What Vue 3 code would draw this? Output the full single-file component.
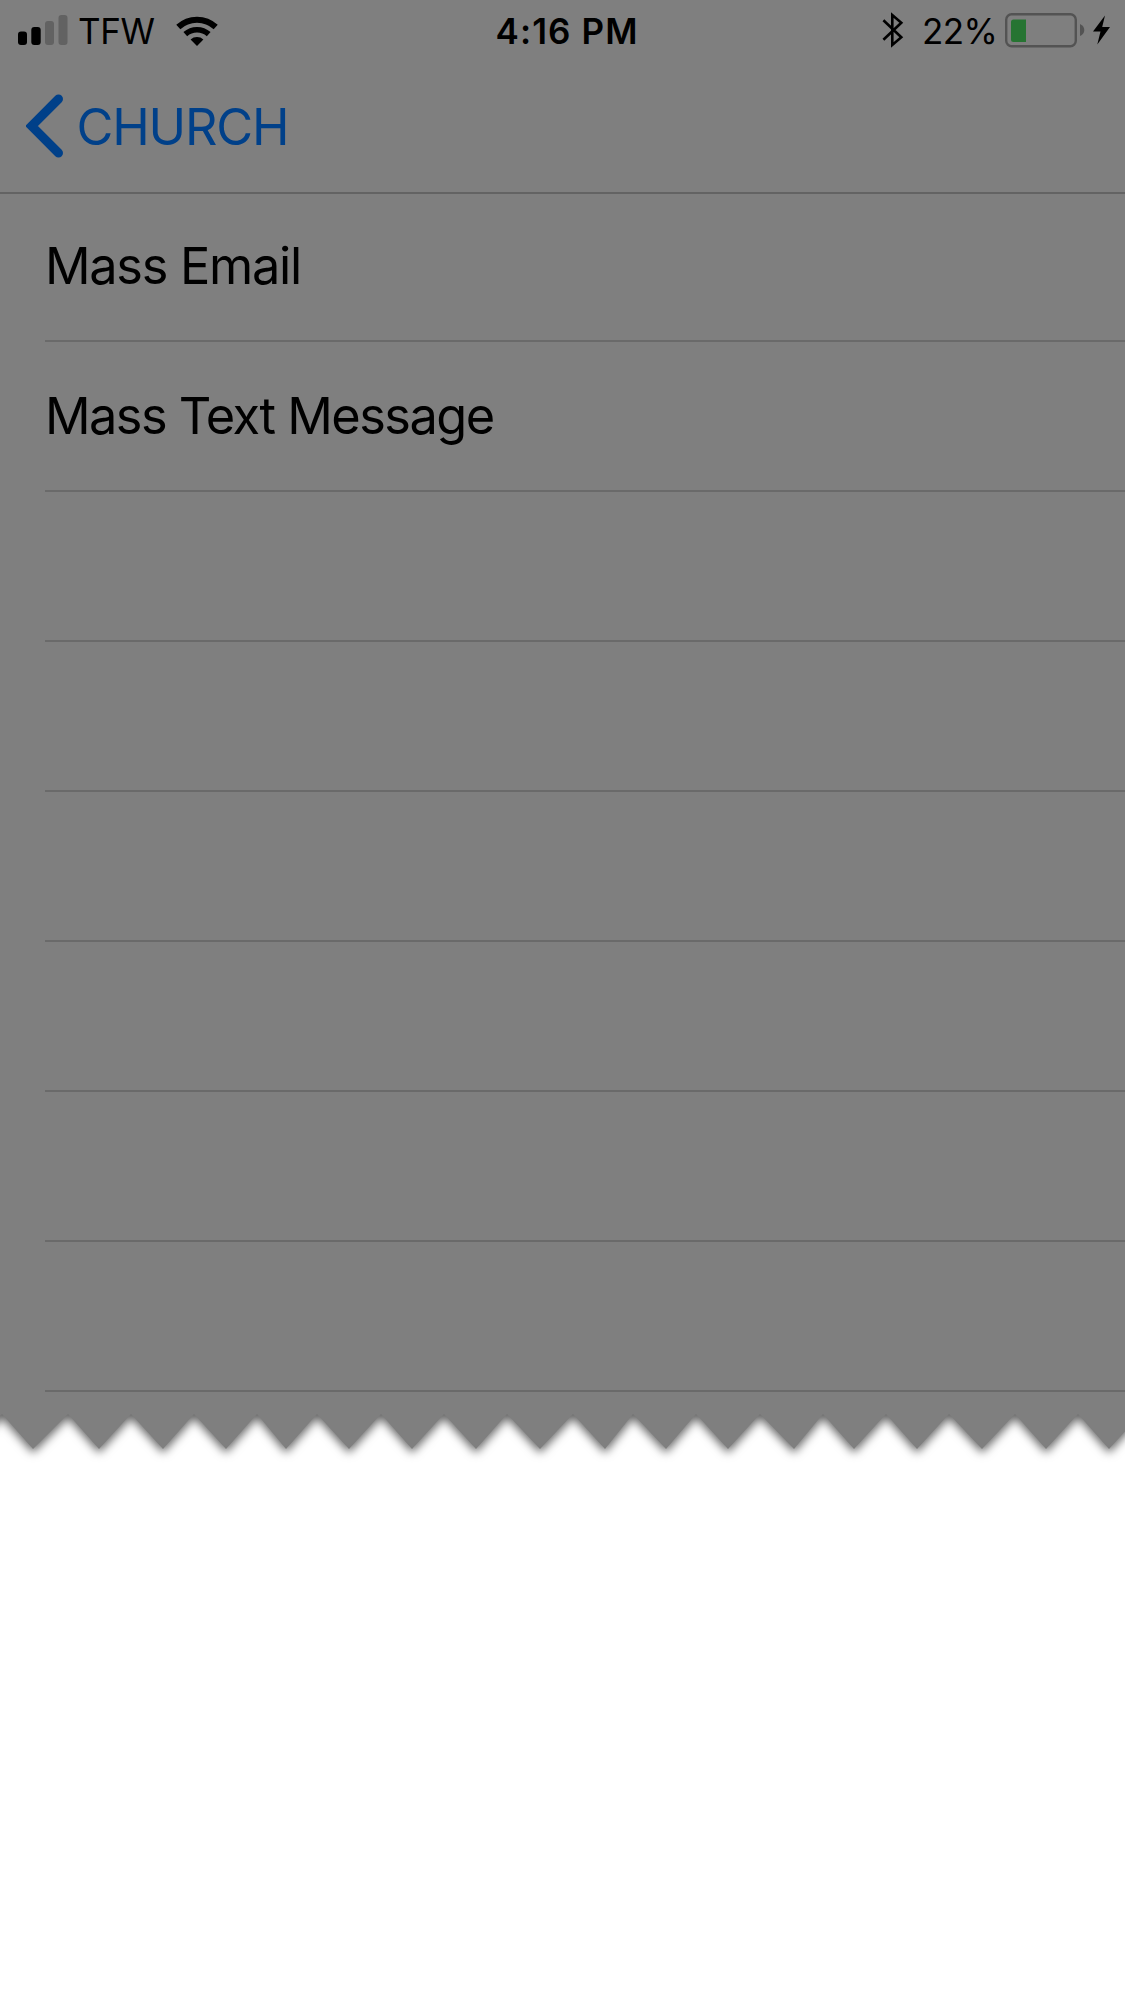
<script setup>
const rows = ['Mass Email', 'Mass Text Message', '', '', '', '', '', '']

const peaks = [2, 68, 131, 194, 257, 317, 381, 444, 507, 573, 633, 696, 760, 823, 886, 949, 1015, 1078]
const tips = [33, 99, 163, 226, 286, 349, 412, 476, 540, 605, 666, 728, 794, 854, 917, 982, 1046, 1109]
const tornEdge =
  'M-30 -40 V34 L' + peaks.map((x, i) => `${x} 2 L${tips[i]} 37`).join(' L') + ' L1141 2 L1172 37 V-40 Z'
</script>

<template>
  <main class="screen">
    <div class="sheet">
      <header class="top">
        <div class="status">
          <div class="side">
            <svg class="signal" width="50" height="32" viewBox="0 0 50 32">
              <rect x="0" y="17.5" width="9" height="13.5" rx="3" />
              <rect x="13.3" y="13" width="9.4" height="18" rx="3" />
              <rect x="27" y="7" width="9" height="24" rx="3" fill="#626262" />
              <rect x="40.5" y="1" width="9" height="30" rx="3" fill="#626262" />
            </svg>
            <span class="carrier">TFW</span>
            <svg class="wifi" width="42" height="31" viewBox="0 0 42 31">
              <path d="M2.3 12 A27.5 27.5 0 0 1 39.7 12" fill="none" stroke="#000" stroke-width="6" />
              <path d="M9.3 19.2 A17.5 17.5 0 0 1 32.7 19.2" fill="none" stroke="#000" stroke-width="5.6" />
              <path d="M14.6 24.5 A9.5 9.5 0 0 1 27.4 24.5 L21 31 Z" />
            </svg>
          </div>
          <span class="time">4:16 PM</span>
          <div class="side right">
            <svg class="bluetooth" width="22" height="36" viewBox="0 0 22 36">
              <path d="M1.4 8.3 L19.3 25.3 L10.3 33 V3 L19.3 10.7 L1.4 27.7" fill="none" stroke="#000" stroke-width="2.6" />
            </svg>
            <span class="percent">22%</span>
            <svg class="battery" width="80" height="36" viewBox="0 0 80 36">
              <rect x="1.2" y="2.2" width="69.6" height="32" rx="5.5" fill="none" stroke="#535353" stroke-width="2.4" />
              <path d="M8.5 7.5 H21 V30 H8.5 Q6 30 6 27.5 V10 Q6 7.5 8.5 7.5 Z" fill="#267432" />
              <path d="M75 12 Q79.3 14 79.3 18 Q79.3 22 75 24 Z" fill="#535353" />
            </svg>
            <svg class="bolt" width="17" height="30" viewBox="0 0 17 30">
              <path d="M12 0.5 L0 16.5 H7.5 L4.3 29.5 L17 12 H9.2 Z" />
            </svg>
          </div>
        </div>
        <nav class="nav">
          <svg class="chevron" width="38" height="66" viewBox="0 0 38 66">
            <path d="M32.5 6 L5.5 33 L32.5 60" fill="none" stroke="#004089" stroke-width="9" stroke-linecap="round" />
          </svg>
          <span class="back">CHURCH</span>
        </nav>
      </header>
      <ul class="list">
        <li v-for="(label, i) in rows" :key="i" class="row">
          <span class="label">{{ label }}</span>
        </li>
      </ul>
    </div>
    <svg class="torn" width="1125" height="80" viewBox="0 0 1125 80">
      <path :d="tornEdge" fill="#7f7f7f" />
    </svg>
  </main>
</template>

<style>
body {
  background: #fff;
}
</style>

<style scoped>
.screen {
  width: 1125px;
  height: 2001px;
  overflow: hidden;
  background: #fff;
  color: #000;
  font-family: Inter, "Liberation Sans", sans-serif;
  white-space: nowrap;
}
.sheet {
  height: 1412px;
  background: #7f7f7f;
}
.top {
  box-sizing: border-box;
  height: 194px;
  border-bottom: 2px solid #636363;
}
.status {
  display: grid;
  grid-template-columns: 495.5px auto 1fr;
  height: 60px;
  align-items: center;
  font-size: 35px;
  line-height: 58px;
}
.side {
  display: flex;
  align-items: center;
  padding-left: 18px;
}
.right {
  justify-content: flex-end;
  padding: 0 15px 0 0;
}
.carrier {
  width: 81px;
  margin-left: 10px;
  padding-top: 1px;
  letter-spacing: -0.4px;
}
.wifi {
  margin-left: 16.5px;
}
.time {
  padding-top: 1px;
  font-weight: 600;
  letter-spacing: 1.1px;
}
.percent {
  width: 72px;
  margin: 0 11px 0 18px;
  padding-top: 1px;
  letter-spacing: -0.6px;
}
.bolt {
  margin-left: 8px;
}
.nav {
  display: flex;
  align-items: center;
  height: 132px;
  padding-left: 26px;
}
.chevron {
  flex: none;
}
.back {
  margin-left: 12.5px;
  color: #004089;
  font-size: 50.5px;
  letter-spacing: -1.2px;
}
.list {
  margin: 0;
  padding: 0 0 0 45px;
  list-style: none;
}
.row {
  box-sizing: border-box;
  display: flex;
  align-items: center;
  height: 150px;
  padding-bottom: 1px;
  border-bottom: 2px solid #6a6a6a;
}
.row:first-child {
  height: 148px;
  padding-bottom: 3px;
}
.label {
  font-size: 50.5px;
  letter-spacing: -1.55px;
}
.row:first-child .label {
  letter-spacing: -1.3px;
}
.torn {
  display: block;
}
.torn path {
  filter: drop-shadow(0 4px 5px rgba(0, 0, 0, 0.6));
}
</style>
